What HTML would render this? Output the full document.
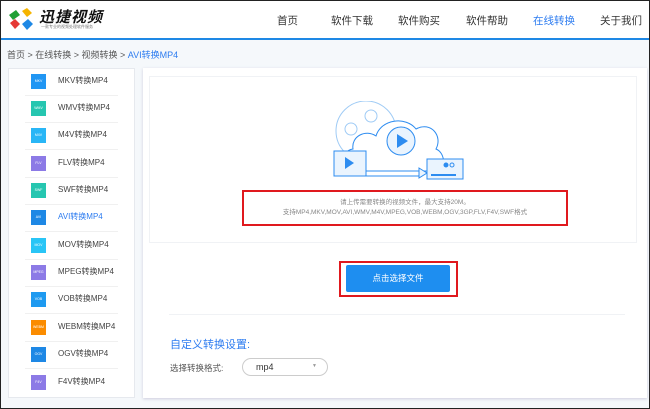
<!DOCTYPE html><html><head><meta charset="utf-8"><style>
*{margin:0;padding:0;box-sizing:border-box}
body{width:650px;height:409px;overflow:hidden;background:#f5f8fb;font-family:"Liberation Sans","Noto Sans CJK SC",sans-serif;position:relative;border:1px solid #222}
.a{position:absolute}
.hdr{left:0;top:0;width:648px;height:39px;background:#fff;border-bottom:2px solid #1e88e5}
.nav{top:12px;font-size:10.5px;color:#333;white-space:nowrap}
.sb{left:7px;top:67px;width:127px;height:330px;background:#fff;border:1px solid #e6e9ee}
.it{position:absolute;left:16px;width:93px;height:27px;border-bottom:1px solid #f0f0f0}
.ic{position:absolute;left:6px;top:5px;width:15px;height:15px;color:#fff;font-size:3.5px;text-align:center;line-height:15px}
.tx{position:absolute;left:33px;top:6px;font-size:8px;color:#444;white-space:nowrap}
.mp{left:142px;top:67px;width:504px;height:330px;background:#fff;box-shadow:0 1px 3px #ccd}
</style></head><body>
<div class="a hdr"></div>
<svg class="a" style="left:6px;top:6px" width="28" height="26" viewBox="0 0 28 26">
<path d="M2 8 L9 3 L13 8 L6 13Z" fill="#21a035"/><path d="M15 4 L20 1 L25 6 L20 10Z" fill="#f5b400"/><path d="M3 16 L8 12 L13 17 L8 22Z" fill="#e53935"/><path d="M15 17 L21 12 L26 17 L20 23Z" fill="#1e88e5"/></svg>
<div class="a" style="left:38px;top:5px;font-size:15px;font-weight:bold;font-style:italic;color:#111;letter-spacing:1px">迅捷视频</div>
<div class="a" style="left:40px;top:23px;font-size:4px;color:#777">一款专业的视频处理软件服务</div>
<div class="a nav" style="left:276px">首页</div>
<div class="a nav" style="left:330px">软件下载</div>
<div class="a nav" style="left:397px">软件购买</div>
<div class="a nav" style="left:465px">软件帮助</div>
<div class="a nav" style="left:532px;color:#2d7cf0">在线转换</div>
<div class="a nav" style="left:599px">关于我们</div>
<div class="a" style="left:6px;top:47px;font-size:9px;color:#555;white-space:nowrap">首页 &gt; 在线转换 &gt; 视频转换 &gt; <span style="color:#2d7cf0">AVI转换MP4</span></div>
<div class="a sb">
<div class="it" style="top:0"><div class="ic" style="background:#2196f3">MKV</div><div class="tx">MKV转换MP4</div></div>
<div class="it" style="top:27px"><div class="ic" style="background:#26c6b0">WMV</div><div class="tx">WMV转换MP4</div></div>
<div class="it" style="top:54px"><div class="ic" style="background:#29b6f6">M4V</div><div class="tx">M4V转换MP4</div></div>
<div class="it" style="top:82px"><div class="ic" style="background:#8c7ae6">FLV</div><div class="tx">FLV转换MP4</div></div>
<div class="it" style="top:109px"><div class="ic" style="background:#26c6b0">SWF</div><div class="tx">SWF转换MP4</div></div>
<div class="it" style="top:136px"><div class="ic" style="background:#1e88e5">AVI</div><div class="tx" style="color:#2d7cf0">AVI转换MP4</div></div>
<div class="it" style="top:164px"><div class="ic" style="background:#29c5f6">MOV</div><div class="tx">MOV转换MP4</div></div>
<div class="it" style="top:191px"><div class="ic" style="background:#8c7ae6">MPEG</div><div class="tx">MPEG转换MP4</div></div>
<div class="it" style="top:218px"><div class="ic" style="background:#1e9af0">VOB</div><div class="tx">VOB转换MP4</div></div>
<div class="it" style="top:246px"><div class="ic" style="background:#fb8c00">WEBM</div><div class="tx">WEBM转换MP4</div></div>
<div class="it" style="top:273px"><div class="ic" style="background:#1e88e5">OGV</div><div class="tx">OGV转换MP4</div></div>
<div class="it" style="top:301px;border:none"><div class="ic" style="background:#8c7ae6">F4V</div><div class="tx">F4V转换MP4</div></div>
</div>
<div class="a mp"></div>
<div class="a" style="left:148px;top:75px;width:488px;height:167px;border:1px solid #f0f2f5"></div>
<svg class="a" style="left:330px;top:100px" width="135" height="82" viewBox="0 0 135 82" fill="none" stroke="#2d8cf0" stroke-width="1">
<circle cx="35" cy="30" r="30" stroke="#9fcbf5"/><circle cx="40" cy="15" r="6" stroke="#9fcbf5"/><circle cx="20" cy="28" r="6" stroke="#9fcbf5"/>
<path d="M20 70 C10 70 8 50 22 48 C20 35 35 28 45 35 C50 18 75 15 85 28 C100 20 112 35 105 48 C115 52 115 70 105 70Z" fill="#fff"/>
<circle cx="70" cy="40" r="14" fill="#eaf4fe"/><path d="M66 33 L77 40 L66 47Z" fill="#2d8cf0" stroke="none"/>
<rect x="3" y="50" width="32" height="25" fill="#eaf4fe"/><path d="M14 56 L23 62 L14 68Z" fill="#2d8cf0" stroke="none"/>
<path d="M35 75 H90"/><path d="M88 67 L96 72 L88 77Z" fill="#eaf4fe"/>
<rect x="96" y="58" width="36" height="20" fill="#eaf4fe"/><circle cx="115" cy="64" r="2" fill="#2d8cf0"/><circle cx="121" cy="64" r="2"/><path d="M100 74 H125" stroke-width="2"/></svg>
<div class="a" style="left:241px;top:189px;width:326px;height:36px;border:2px solid #e0191e"></div>
<div class="a" style="left:241px;top:197px;width:326px;text-align:center;font-size:6.5px;color:#888;line-height:10px">请上传需要转换的视频文件，最大支持20M。<br>支持MP4,MKV,MOV,AVI,WMV,M4V,MPEG,VOB,WEBM,OGV,3GP,FLV,F4V,SWF格式</div>
<div class="a" style="left:338px;top:260px;width:119px;height:36px;border:2px solid #e0191e"></div>
<div class="a" style="left:345px;top:264px;width:104px;height:27px;background:#1e8ef0;border-radius:2px;color:#fff;font-size:8.5px;text-align:center;line-height:27px">点击选择文件</div>
<div class="a" style="left:168px;top:313px;width:456px;height:1px;background:#f0f2f5"></div>
<div class="a" style="left:169px;top:335px;font-size:11px;color:#2d7cf0">自定义转换设置:</div>
<div class="a" style="left:169px;top:361px;font-size:8.5px;color:#555">选择转换格式:</div>
<div class="a" style="left:241px;top:357px;width:86px;height:18px;border:1px solid #ccc;border-radius:9px;font-size:9px;color:#333;padding:3px 0 0 13px">mp4<span style="position:absolute;right:10px;top:4px;font-size:5px;color:#999">▼</span></div>
</body></html>
